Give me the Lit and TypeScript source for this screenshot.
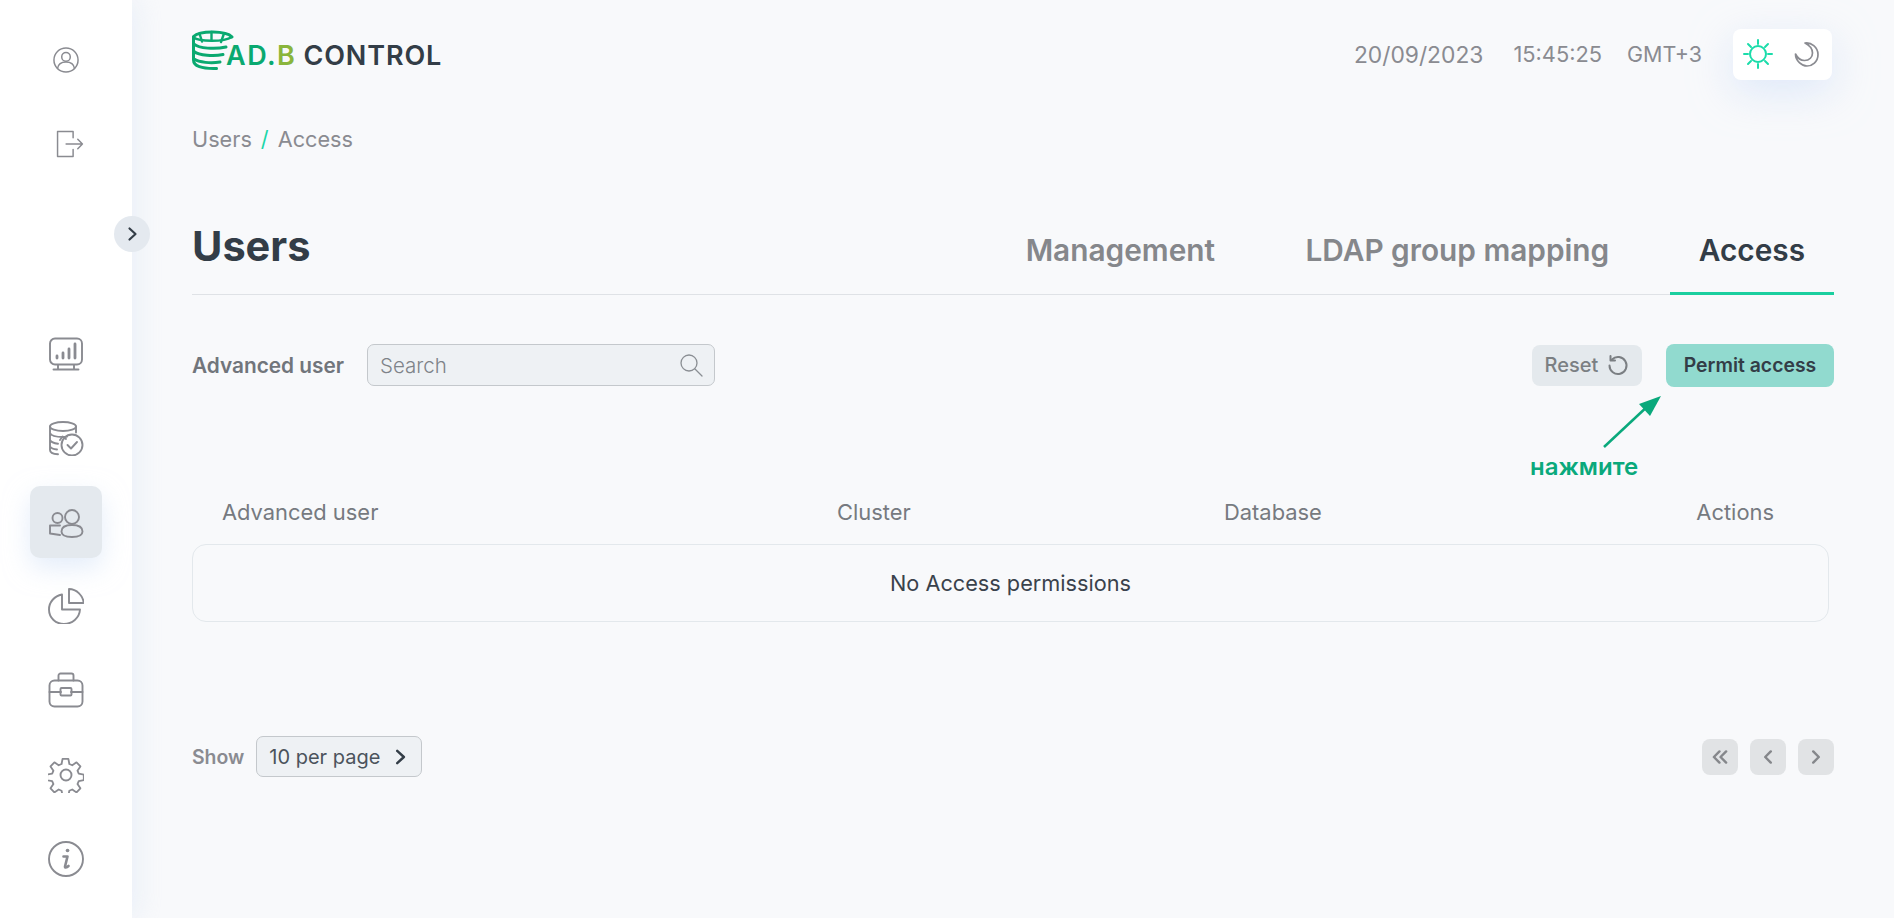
import { LitElement, html, css, svg } from "lit";
import { customElement } from "lit/decorators.js";

const ico = (body: unknown, size = 36, vb = "0 0 36 36") =>
  html`<svg class="ico" width=${size} height=${size} viewBox=${vb} fill="none" stroke="currentColor" stroke-width="1.9" stroke-linecap="round" stroke-linejoin="round">${body}</svg>`;

const icons = {
  user: svg`<circle cx="18" cy="18" r="15.500"/><circle cx="18" cy="14" r="5.500"/><path d="M7 29c1-6 5.500-8.500 11-8.500S28 23 29 29"/>`,
  logout: svg`<path d="M22 10V2H2v32h20v-9"/><path d="M13 18h21M28 12l6 6-6 6"/>`,
  monitor: svg`<rect x="2" y="2.500" width="32" height="26" rx="5"/><path d="M10 29v4M26 29v4M5.500 33.500h25"/><path d="M9 22v-2M15 22v-5M21 22v-9M27 22V8" stroke-width="2.800"/>`,
  db: svg`<ellipse cx="15" cy="6.500" rx="13" ry="4.500"/><path d="M2 6.500V30c0 2.500 3 4 8 4.300M28 6.500v6M2 13c1 2.500 6 4 13 4 1.500 0 3-.2 4-.4M2 20c1 2 4 3.300 8 3.700M2 26.500c1 1.700 3.500 2.700 7 3"/><circle cx="24" cy="25" r="10.500"/><path d="M19.500 25l3.500 3.500 6-6.500"/><path d="M12 20l2.500-3.500L18 19"/>`,
  users: svg`<circle cx="9.500" cy="14" r="5"/><circle cx="24" cy="13" r="7"/><path d="M12 21.500H2v8l10 1.500M24 21c-7 0-10.500 2.500-10.500 6.500 0 4 4 5.500 10.500 5.500s10.500-1.500 10.500-5.500c0-4-3.500-6.500-10.500-6.500z"/>`,
  pie: svg`<path d="M14 6.500C6.500 8 1 14 1 21.500 1 30 8 36 16 36s15.500-6 16-14.500H14z"/><path d="M21 1V15h14.500C35.500 8 28.500 1 21 1z"/>`,
  brief: svg`<rect x="1.500" y="8.500" width="33" height="26" rx="5"/><path d="M10.500 8.500V3.500c0-1 1-2 2-2h11c1 0 2 1 2 2v5M1.500 20H13M23 20h11.500"/><rect x="12.500" y="16" width="11" height="7.500" rx="1"/>`,
  gear: svg`<circle cx="18" cy="18" r="5.500"/><path d="M15 2h6l1 5.200 3 1.300 4.400-3 4 4.200-3 4.400 1.300 3 5.200 1v5.800l-5.200 1-1.300 3 3 4.400-4 4.200-4.400-3-3 1.300-1 5.200h-6l-1-5.200-3-1.300-4.400 3-4-4.200 3-4.400-1.300-3-5.200-1v-5.800l5.200-1 1.300-3-3-4.400 4-4.200 4.400 3 3-1.300z" transform="scale(.97)"/>`,
  info: svg`<circle cx="18" cy="18" r="17"/><path d="M19.500 9.500h.1" stroke-width="3.600"/><path d="M15.500 15.500h4l-2.500 10c-.3 1.300 1.500 1.500 3.500-.5" stroke-width="2.600"/>`,
};

const logo = svg`<g fill="none" stroke="#0aa970" stroke-width="3" stroke-linecap="round" stroke-linejoin="round">
  <path d="M41 7C35 .5 9 .5 2.500 6.500V30c0 6 8 9 23 8.500"/>
  <path d="M8.500 3.500L11 11.500M20.500 2v8M33 3.500L30 12" stroke-width="2.400"/>
  <path d="M2.500 7.500C8 11.500 32 12.500 41 7" stroke-width="2.400"/>
  <path d="M3 14c5 4.500 21 5.500 32 3M3 21.500c5 4 20 5 29 3M3 29c5 3.500 17 4.500 26 3"/>
</g>`;

const chev = (d: string, size = 18) =>
  html`<svg width=${size} height=${size} viewBox="0 0 18 18" fill="none" stroke="currentColor" stroke-width="2.200" stroke-linecap="round" stroke-linejoin="round"><path d=${d}/></svg>`;

@customElement("app-root")
export class AppRoot extends LitElement {
  static styles = css`
    :host { display: block; }
    * { box-sizing: border-box; }
    .page { display: flex; height: 918px; overflow: hidden; background: #f8f9fb; font-family: Inter, "Noto Sans", sans-serif; color: #8a8b91; }
    .side { position: relative; flex: 0 0 132px; background: #fff; box-shadow: 6px 0 24px rgba(215, 228, 245, .4); display: flex; flex-direction: column; align-items: center; padding-top: 24px; z-index: 1; }
    .nav { display: flex; flex-direction: column; gap: 12.100px; }
    .nav.bottom { margin-top: 138px; }
    .item { width: 72px; height: 72px; display: flex; align-items: center; justify-content: center; border-radius: 10px; color: #8a8b91; }
    .item.active { background: #e4e9ee; box-shadow: 0 10px 26px rgba(205, 222, 245, .55); }
    .out { padding-left: 7px; }
    .toggle { position: absolute; left: 114px; top: 216px; width: 36px; height: 36px; border-radius: 50%; background: #e4e9ef; color: #333d47; display: flex; align-items: center; justify-content: center; }
    .main { flex: 1; min-width: 0; padding: 0 60px 0 60px; display: flex; flex-direction: column; }
    .top { display: flex; align-items: center; justify-content: space-between; height: 100px; }
    .logo { display: flex; align-items: center; font-weight: 600; font-size: 27px; margin-left: -1px; }
    .logo svg { margin-right: -9px; }
    .logo .g { color: #0aa970; }
    .logo .b { color: #8ab53c; }
    .logo .ad { margin-top: 11px; letter-spacing: 1.500px; }
    .logo .ctl { margin-top: 11px; margin-left: 7px; color: #333d47; letter-spacing: .900px; }
    .clock { display: flex; align-items: center; font-size: 22.800px; color: #8a8b91; }
    .clock span { margin-top: 8px; }
    .date { margin-right: 30px; }
    .time { margin-right: 25px; font-size: 21.800px; }
    .zone { margin-right: 31px; font-size: 21.500px; }
    .theme { width: 99px; height: 51px; margin-right: 2px; margin-top: 8px; background: #fff; border-radius: 8px; box-shadow: 0 12px 40px rgba(205, 222, 248, .6); display: flex; align-items: center; gap: 21px; padding: 0 0 0 10px; }
    .crumbs { display: flex; align-items: center; gap: 9px; font-size: 21.700px; height: 28px; margin-top: 25px; }
    .crumbs i { color: #1bd6a8; font-style: normal; }
    .head { display: flex; align-items: center; justify-content: space-between; height: 84px; margin-top: 58px; border-bottom: 1px solid #dfe2e6; }
    .head h1 { margin: 0 0 14px; font-size: 41.500px; line-height: 46px; font-weight: 700; color: #333d47; }
    .tabs { display: flex; gap: 30.500px; align-self: stretch; }
    .tab { display: flex; align-items: center; padding: 0 30px 4px; font-size: 29.800px; font-weight: 600; color: #85878b; height: 84px; border-bottom: 3px solid transparent; }
    .tab.on { color: #333d47; border-bottom-color: #1bcf9f; margin-bottom: -1px; padding: 0 29px 4px; }
    .filters { display: flex; align-items: center; margin-top: 49px; height: 42px; position: relative; }
    .flabel { font-size: 20.800px; font-weight: 600; color: #71757b; margin-right: 23px; }
    .search { width: 348px; height: 42px; background: #eef1f4; border: 1px solid #c4c8cc; border-radius: 7px; display: flex; align-items: center; justify-content: space-between; padding: 0 11px 0 12px; font-size: 20.500px; font-weight: 300; color: #7e8389; }
    .spacer { flex: 1; }
    .btn { display: flex; align-items: center; justify-content: center; border-radius: 8px; font-size: 19.400px; font-weight: 500; }
    .reset { width: 110px; height: 41px; background: #e4e9ed; color: #7b7f83; gap: 9px; margin-right: 24px; font-size: 20px; }
    .permit { width: 168px; height: 43px; background: #91dacf; color: #333d47; font-weight: 600; }
    .note { position: absolute; left: 1400px; top: 46px; width: 70px; height: 60px; }
    .note-t { position: absolute; left: 1338px; top: 108px; font-size: 24px; font-weight: 600; color: #0aa97c; }
    .thead { display: grid; grid-template-columns: 615px 387px 1fr auto; padding: 0 60px 0 30px; margin-top: 113px; font-size: 21.900px; color: #767a80; height: 26px; align-items: center; }
    .tbox { margin-top: 19px; width: 1637px; height: 78px; border: 1px solid #e3e8ec; border-radius: 14px; display: flex; align-items: center; justify-content: center; font-size: 21.700px; color: #3a424c; }
    .pager { display: flex; align-items: center; margin-top: 114px; height: 41px; }
    .show { font-size: 19.400px; font-weight: 600; color: #8a8b91; margin-right: 12px; }
    .select { width: 166px; height: 41px; background: #eef1f4; border: 1px solid #c4c8cc; border-radius: 7px; display: flex; align-items: center; justify-content: space-between; padding: 0 11px 0 12px; font-size: 20px; color: #4b535c; }
    .select svg { color: #333d47; }
    .pg { display: flex; gap: 12px; }
    .pg div { width: 36px; height: 36px; border-radius: 8px; background: #e1e3e5; color: #85878b; display: flex; align-items: center; justify-content: center; }
  `;

  render() {
    return html`<div class="page">
      <aside class="side">
        <div class="nav">
          <div class="item">${ico(icons.user, 28)}</div>
          <div class="item out">${ico(icons.logout, 28)}</div>
        </div>
        <div class="nav bottom">
          <div class="item">${ico(icons.monitor)}</div>
          <div class="item">${ico(icons.db)}</div>
          <div class="item active">${ico(icons.users)}</div>
          <div class="item">${ico(icons.pie)}</div>
          <div class="item">${ico(icons.brief)}</div>
          <div class="item">${ico(icons.gear)}</div>
          <div class="item">${ico(icons.info)}</div>
        </div>
        <div class="toggle">${chev("M6.500 3.500l6 5.500-6 5.500")}</div>
      </aside>
      <main class="main">
        <header class="top">
          <div class="logo">
            <svg width="44" height="41" viewBox="0 0 44 41">${logo}</svg>
            <span class="ad"><span class="g">AD.</span><span class="b">B</span></span>
            <span class="ctl">CONTROL</span>
          </div>
          <div class="clock">
            <span class="date">20/09/2023</span><span class="time">15:45:25</span><span class="zone">GMT+3</span>
            <div class="theme">
              <svg width="30" height="30" viewBox="0 0 30 30" fill="none" stroke="#1bdcaa" stroke-width="2" stroke-linecap="round"><circle cx="15" cy="15" r="8"/><path d="M15 1v4M15 25v4M1 15h4M25 15h4M5 5l3 3M22 22l3 3M5 25l3-3M22 8l3-3"/></svg>
              <svg width="26" height="26" viewBox="0 0 26 26" fill="none" stroke="#8a8b91" stroke-width="1.700" stroke-linejoin="round"><path d="M11 2c6-1 13 4 13 11.500S18 25 13 25 1.500 20 1.500 13c2 4 5 6.500 9 6.500 5 0 8-3.500 8-7.500S15 4 11 2z"/></svg>
            </div>
          </div>
        </header>
        <nav class="crumbs"><span>Users</span><i>/</i><span>Access</span></nav>
        <section class="head">
          <h1>Users</h1>
          <div class="tabs">
            <div class="tab">Management</div>
            <div class="tab">LDAP group mapping</div>
            <div class="tab on">Access</div>
          </div>
        </section>
        <section class="filters">
          <div class="flabel">Advanced user</div>
          <div class="search">
            <span>Search</span>
            <svg width="24" height="24" viewBox="0 0 24 24" fill="none" stroke="#8a8e93" stroke-width="1.300" stroke-linecap="round"><circle cx="10" cy="10" r="8"/><path d="M16 16l7 7"/></svg>
          </div>
          <div class="spacer"></div>
          <div class="btn reset">Reset
            <svg width="22" height="22" viewBox="0 0 22 22" fill="none" stroke="#7b7f83" stroke-width="2" stroke-linecap="round" stroke-linejoin="round"><path d="M5 5.500A8.500 8.500 0 1 1 2.500 11.500"/><path d="M3.500 2v4.500H8"/></svg>
          </div>
          <div class="btn permit">Permit access</div>
          <svg class="note" viewBox="0 0 70 60"><path d="M12 57L58 14" stroke="#0aa97c" stroke-width="2.500"/><path d="M69 6L47 14l11 12z" fill="#0aa97c"/></svg>
          <div class="note-t">нажмите</div>
        </section>
        <section class="thead"><span>Advanced user</span><span>Cluster</span><span>Database</span><span>Actions</span></section>
        <section class="tbox">No Access permissions</section>
        <section class="pager">
          <div class="show">Show</div>
          <div class="select"><span>10 per page</span>${chev("M6.500 3.500l6 5.500-6 5.500", 20)}</div>
          <div class="spacer"></div>
          <div class="pg">
            <div>${chev("M8.500 4L3.500 9l5 5M14.500 4l-5 5 5 5", 20)}</div>
            <div>${chev("M11.500 4l-5 5 5 5", 20)}</div>
            <div>${chev("M6.500 4l5 5-5 5", 20)}</div>
          </div>
        </section>
      </main>
    </div>`;
  }
}
